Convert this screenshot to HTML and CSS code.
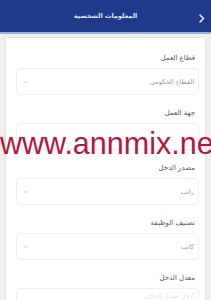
FILE: index.html
```html
<!DOCTYPE html>
<html lang="ar" dir="rtl">
<head>
<meta charset="utf-8">
<link rel="stylesheet" href="styles.css">
</head>
<body>
<header class="topbar">
  <span class="back">
    <svg width="6" height="9" viewBox="0 0 6 9"><polyline points="1,1 4.5,4.5 1,8" fill="none" stroke="#e8ecf7" stroke-width="1.6" stroke-linecap="round" stroke-linejoin="round"/></svg>
  </span>
  <h1 class="title">المعلومات الشخصية</h1>
</header>
<main class="page">
  <section class="card">
    <div class="field">
      <label class="label">قطاع العمل</label>
      <div class="input select"><span class="value">القطاع الحكومي</span><span class="chev"><svg width="5" height="4" viewBox="0 0 5 4"><polyline points="0.8,1 2.5,2.8 4.2,1" fill="none" stroke="#cfd38a" stroke-width="1"/></svg></span></div>
    </div>
    <div class="field">
      <label class="label">جهة العمل</label>
      <div class="input"></div>
    </div>
    <div class="field">
      <label class="label">مصدر الدخل</label>
      <div class="input select"><span class="value">راتب</span><span class="chev"><svg width="5" height="4" viewBox="0 0 5 4"><polyline points="0.8,1 2.5,2.8 4.2,1" fill="none" stroke="#cfd38a" stroke-width="1"/></svg></span></div>
    </div>
    <div class="field">
      <label class="label">تصنيف الوظيفة</label>
      <div class="input select"><span class="value">كاتب</span><span class="chev"><svg width="5" height="4" viewBox="0 0 5 4"><polyline points="0.8,1 2.5,2.8 4.2,1" fill="none" stroke="#cfd38a" stroke-width="1"/></svg></span></div>
    </div>
    <div class="field">
      <label class="label">معدل الدخل</label>
      <div class="input top"><span class="value faint">أدخل معدل الدخل</span></div>
    </div>
  </section>
</main>
<div class="watermark" dir="ltr">www.annmix.ne</div>
</body>
</html>
```
FILE: styles.css
```css
* { box-sizing: border-box; margin: 0; padding: 0; }
html, body { width: 211px; height: 300px; overflow: hidden; }
body {
  background: #efefef;
  font-family: "DejaVu Sans", sans-serif;
  position: relative;
}
.topbar {
  height: 34px;
  background: #1e3a8c;
  border-bottom: 2px solid #9db0d8;
  display: flex;
  align-items: center;
  justify-content: center;
  position: relative;
}
.title {
  font-size: 6.5px;
  font-weight: bold;
  color: #dfe5f3;
  line-height: 1;
}
.back {
  position: absolute;
  right: 6px;
  top: 14px;
  display: flex;
}
.page {
  padding: 4px 6px 0 6px;
}
.card {
  background: #ffffff;
  padding: 16px 6px 0 10px;
  display: flex;
  flex-direction: column;
  gap: 14px;
  height: 270px;
  box-shadow: 0 0 3px rgba(0,0,0,0.1);
}
.field {
  display: flex;
  flex-direction: column;
}
.label {
  font-size: 7px;
  line-height: 9px;
  height: 9px;
  color: #555;
  padding-right: 4px;
  margin-bottom: 5px;
}
.input {
  height: 27px;
  border: 1px solid #f0f0ec;
  border-radius: 4px;
  display: flex;
  align-items: center;
  justify-content: space-between;
  padding: 0 4px 0 6px;
  background: #fff;
}
.input.top {
  align-items: flex-start;
  padding-top: 3px;
}
.value {
  font-size: 6.5px;
  color: #9a9a9a;
}
.value.faint { color: #e2e2e2; }
.chev { display: flex; }
.watermark {
  position: absolute;
  left: 0;
  top: 125px;
  font-family: "Liberation Sans", Arial, sans-serif;
  font-size: 30.5px;
  line-height: 36px;
  color: #b8163c;
  white-space: nowrap;
}
```
